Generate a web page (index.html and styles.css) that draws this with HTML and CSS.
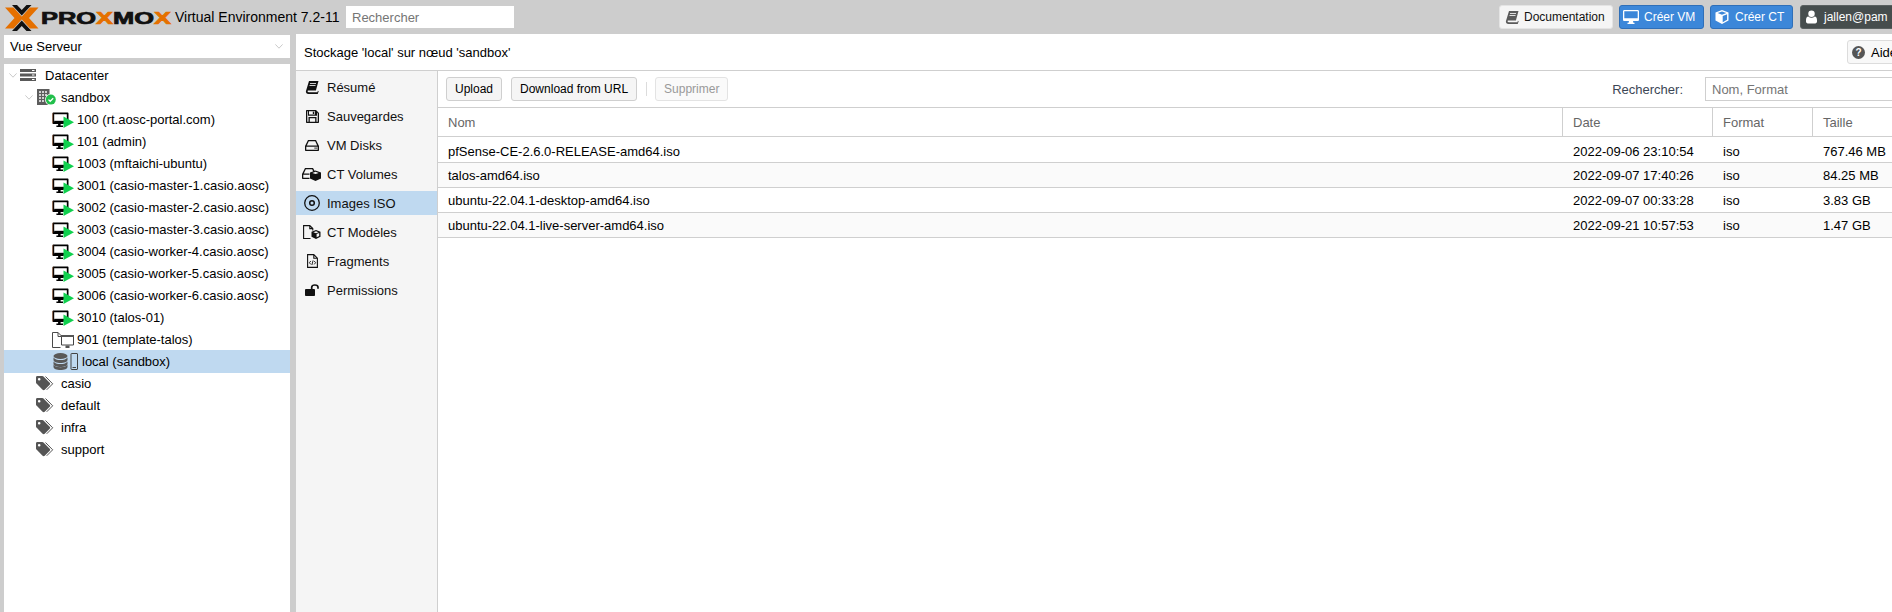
FILE: index.html
```html
<!DOCTYPE html>
<html lang="fr">
<head>
    <meta charset="UTF-8">
    <title>sandbox - Proxmox Virtual Environment</title>
    <link rel="stylesheet" href="styles.css">
</head>
<body>
    <!-- Icon sprites -->
    <svg class="sprites" xmlns="http://www.w3.org/2000/svg">
        <symbol id="i-book" viewBox="0 0 14 14">
            <path d="M4 1h9.500l-2.600 9.600H3.600c-.9 0-1.200.5-1 1 .2.5.6.7 1.200.7h8.600l.5-1.500.8.4-1 2.800H3.400C1.800 14 .7 12.900 .9 11.300z"/>
            <path d="M5 3.500h6M4.500 5.500h6" stroke="#fff" stroke-width=".8"/>
        </symbol>
        <symbol id="i-desktop" viewBox="0 0 16 14">
            <path d="M1.300 0h13.400c.7 0 1.300.6 1.300 1.300v8.400c0 .7-.6 1.300-1.300 1.300H10l.4 1.800h1.100V14h-7v-1.200h1.100L6 11H1.300C.6 11 0 10.400 0 9.700V1.300C0 .6.600 0 1.300 0zM1.300 1.300v7h13.400v-7z"/>
        </symbol>
        <symbol id="i-cube" viewBox="0 0 14 14">
            <path d="M7 0l6.500 2.400v8.200L7 14 .5 10.600V2.400zM7 1.400L2.600 3 7 4.700 11.400 3zM7.700 6v6.200l4.400-2.400V4.300z"/>
        </symbol>
        <symbol id="i-user" viewBox="0 0 12 14">
            <circle cx="6" cy="3.500" r="3.500"/>
            <path d="M2.500 6.500c1 .9 2.200 1.300 3.500 1.300s2.500-.4 3.500-1.300c1.600 0 2.500 1.500 2.500 4V12c0 1.200-.8 2-2 2H2c-1.200 0-2-.8-2-2v-1.500c0-2.500.9-4 2.500-4z"/>
        </symbol>
        <symbol id="i-floppy" viewBox="0 0 13 13">
            <path fill-rule="evenodd" d="M1 0h9l3 3v9c0 .6-.4 1-1 1H1c-.6 0-1-.4-1-1V1c0-.6.4-1 1-1zM3 1.300v3.200h6V1.300zM6.800 1.800h1.500v2.200H6.800zM1.300 1.300v10.400h1.200V7h8v4.700h1.200V3.500L11 2.500v3.300H2V1.300zM3.800 8.200v3.500h5.400V8.200z"/>
        </symbol>
        <symbol id="i-hdd" viewBox="0 0 14 11">
            <path fill-rule="evenodd" d="M3 0h8l3 6v4c0 .6-.4 1-1 1H1c-.6 0-1-.4-1-1V6zM3.800 1.300L1.800 5.500h10.400l-2-4.200zM1.300 6.800v2.900h11.400V6.800zM9.500 7.600h1.200v1.200H9.500zM11.300 7.600h.9v1.200h-.9z"/>
        </symbol>
        <symbol id="i-ctvol" viewBox="0 0 20 14">
            <path fill-rule="evenodd" d="M3 1h8l2.200 4H11.400l-1.200-2.700H3.800L1.800 6.500h5.700v1.300H1.300v2.900h6.200V12H1c-.6 0-1-.4-1-1V7z"/>
            <path d="M13.500 3.500l5.500 2v6L13.500 14 8 11.500v-6z"/>
            <path d="M13.500 4.800l-3.200 1.100 3.200 1.200 3.200-1.200z" fill="#f5f5f5"/>
        </symbol>
        <symbol id="i-iso" viewBox="0 0 16 16">
            <path fill="none" stroke="currentColor" stroke-width="1.300" d="M8 .7a7.300 7.300 0 1 0 0 14.600A7.300 7.300 0 0 0 8 .7z"/>
            <circle cx="8" cy="8" r="2.300" fill="none" stroke="currentColor" stroke-width="1.500"/>
        </symbol>
        <symbol id="i-ctpl" viewBox="0 0 18 14">
            <path fill="none" stroke="currentColor" stroke-width="1.100" d="M7.500 13.500H.6V.6h6.200l3 3v2M6.800.6v3h3"/>
            <path d="M13 5l4.500 1.800v5L13 14l-4.500-2.200v-5z"/>
            <path d="M13 6.200l-2.600 1 2.600 1 2.600-1z" fill="#f5f5f5"/>
            <path d="M13.600 9v3.300l2.600-1.300V8z" fill="#f5f5f5"/>
        </symbol>
        <symbol id="i-code" viewBox="0 0 11 14">
            <path fill="none" stroke="currentColor" stroke-width="1.100" d="M.6.600h6.200l3.600 3.600v9.200H.6zM6.800.6v3.600h3.600"/>
            <path fill="none" stroke="currentColor" stroke-width=".9" d="M3.800 7L2.400 8.700l1.400 1.700M7.200 7l1.400 1.700-1.400 1.700M6.100 6.400L4.900 11"/>
        </symbol>
        <symbol id="i-unlock" viewBox="0 0 14 12">
            <path d="M.8 5h8.400c.4 0 .8.400.8.800v5.400c0 .4-.4.800-.8.800H.8c-.4 0-.8-.4-.8-.8V5.800C0 5.400.4 5 .8 5z"/>
            <path d="M6.700 5V3.300C6.700 1.900 7.900 1 9.800 1s3.200.9 3.200 2.300v1.500" fill="none" stroke="currentColor" stroke-width="1.700"/>
        </symbol>
        <symbol id="i-chevron" viewBox="0 0 8 5">
            <path d="M.4.400L4 4.200 7.600.4" fill="none" stroke="currentColor" stroke-width=".9"/>
        </symbol>
        <symbol id="i-qemu" viewBox="0 0 22 16">
            <path d="M1.500 .6h14c.6 0 1 .4 1 1V9h-1.700V2.300H2.200v7.500H11V12H8.600v1.400H11V15H4.400v-1.600h1.700V12H1.500c-.6 0-1-.4-1-1V1.600c0-.6.4-1 1-1z"/>
            <path d="M2.200 8.800h10v3H2.200z"/>
            <path d="M1.500.8L.7 1.800v9.500" fill="none" stroke="#a8521e" stroke-width=".5"/>
            <path d="M11.500 4.500L22 10.200 11.500 16z" fill="#10d04e"/>
        </symbol>
        <symbol id="i-template" viewBox="0 0 22 16">
            <path fill="none" stroke="#4a4a4a" stroke-width="1" d="M8.500 15.500H.5V.5h5.500l4 4v-.5M6 .5v4h4"/>
            <path fill="#fff" stroke="#444" stroke-width="1" d="M9.500 3.500h12v9.500h-12z"/>
            <path fill="#555" d="M9 3h13v2H9zM13.500 13.500h4V16h-4z"/>
        </symbol>
        <symbol id="i-storage" viewBox="0 0 25 17">
            <ellipse cx="7.500" cy="3" rx="7" ry="3" fill="#595959"/>
            <path fill="#595959" d="M.5 4.500c1 1.700 3.700 2.600 7 2.600s6-.9 7-2.600V7c0 1.700-3.100 3-7 3s-7-1.300-7-3z"/>
            <path fill="#595959" d="M.5 8.500c1 1.700 3.700 2.600 7 2.600s6-.9 7-2.600V11c0 1.700-3.100 3-7 3s-7-1.300-7-3z"/>
            <path fill="#595959" d="M.5 11.800c1 1.700 3.700 2.500 7 2.500s6-.8 7-2.500V14c0 1.700-3.100 3-7 3s-7-1.300-7-3z"/>
            <path fill="none" stroke="#444" stroke-width="1" d="M18.500.5h5.500c.3 0 .5.200.5.500v15c0 .3-.2.500-.5.500h-5.500c-.3 0-.5-.2-.5-.5V1c0-.3.200-.5.500-.5z"/>
            <path stroke="#444" d="M19.500 14.500h3.500"/>
        </symbol>
        <symbol id="i-tag" viewBox="0 0 18 15">
            <path fill="#555" d="M0 1.300C0 .6.600 0 1.300 0h5c.5 0 .9.200 1.200.5l6.200 6.200c.6.600.6 1.500 0 2.100l-5 5c-.6.600-1.500.6-2.100 0L.5 7.600C.2 7.300 0 6.900 0 6.400zM3.200 2a1.300 1.300 0 1 0 0 2.600 1.300 1.300 0 0 0 0-2.600z" fill-rule="evenodd"/>
            <path fill="none" stroke="#555" stroke-width="1" d="M9.500.5l7.200 7.300-6 6"/>
        </symbol>
    </svg>

    <header class="topbar">
        <svg class="logo" viewBox="0 0 168 26" width="168" height="26">
            <path class="logo-orange" d="M0 2.500h8.500L18 13l-9.500 10.500H0L9.500 13z"/>
            <path class="logo-orange" d="M33.500 2.500H25L15.500 13 25 23.500h8.500L24 13z"/>
            <path class="logo-black" d="M7 0h5l4.750 5L21.500 0h5L16.750 10.500z"/>
            <path class="logo-black" d="M7 26h5l4.750-5 4.750 5h5L16.750 15.500z"/>
            <text class="logo-text" x="36" y="19" textLength="130" lengthAdjust="spacingAndGlyphs">PRO<tspan class="logo-orange">X</tspan>MO<tspan class="logo-orange">X</tspan></text>
        </svg>
        <span class="version">Virtual Environment 7.2-11</span>
        <input class="global-search" type="text" placeholder="Rechercher">
        <div class="top-actions">
            <button class="btn btn-light"><svg class="ico"><use href="#i-book"/></svg>Documentation</button>
            <button class="btn btn-blue"><svg class="ico ico-desktop"><use href="#i-desktop"/></svg>Créer VM</button>
            <button class="btn btn-blue btn-ct"><svg class="ico"><use href="#i-cube"/></svg>Créer CT</button>
            <button class="btn btn-user"><svg class="ico ico-user"><use href="#i-user"/></svg>jallen@pam</button>
        </div>
    </header>

    <div class="main">
        <aside class="side">
            <div class="view-select">
                <span>Vue Serveur</span>
                <svg class="chevron"><use href="#i-chevron"/></svg>
            </div>
            <ul class="tree">
                <li class="node lvl-root">
                    <svg class="chevron"><use href="#i-chevron"/></svg>
                    <svg class="t-dc" viewBox="0 0 16 12" width="16" height="12">
                        <path fill="#595959" d="M0 0h16v3H0zM0 4.500h16v3H0zM0 9h16v3H0z"/>
                        <path fill="#fff" d="M12 1h2.500v1H12zM12 5.500h2.500v1H12zM12 10h2.500v1H12z"/>
                    </svg>
                    <span>Datacenter</span>
                </li>
                <li class="node lvl-node">
                    <svg class="chevron"><use href="#i-chevron"/></svg>
                    <svg class="t-host" viewBox="0 0 20 16" width="20" height="16">
                        <path fill="#5d5d5d" d="M0 0h12.500v16H0z"/>
                        <path fill="#cfcfcf" d="M2 2h2v2H2zM5 2h2v2H5zM8 2h2v2H8zM2 5h2v2H2zM5 5h2v2H5zM8 5h2v2H8zM2 8h2v2H2zM5 8h2v2H5zM2 11h2v2H2zM5 11h2v2H5z"/>
                        <circle cx="13.800" cy="10.600" r="5.800" fill="#fff"/>
                        <circle cx="13.800" cy="10.600" r="5" fill="#21bf4b"/>
                        <path d="M11.500 10.600l1.700 1.700 3-3" fill="none" stroke="#fff" stroke-width="1.300"/>
                    </svg>
                    <span>sandbox</span>
                </li>
                <li class="node lvl-vm"><svg class="t-vm"><use href="#i-qemu"/></svg><span>100 (rt.aosc-portal.com)</span></li>
                <li class="node lvl-vm"><svg class="t-vm"><use href="#i-qemu"/></svg><span>101 (admin)</span></li>
                <li class="node lvl-vm"><svg class="t-vm"><use href="#i-qemu"/></svg><span>1003 (mftaichi-ubuntu)</span></li>
                <li class="node lvl-vm"><svg class="t-vm"><use href="#i-qemu"/></svg><span>3001 (casio-master-1.casio.aosc)</span></li>
                <li class="node lvl-vm"><svg class="t-vm"><use href="#i-qemu"/></svg><span>3002 (casio-master-2.casio.aosc)</span></li>
                <li class="node lvl-vm"><svg class="t-vm"><use href="#i-qemu"/></svg><span>3003 (casio-master-3.casio.aosc)</span></li>
                <li class="node lvl-vm"><svg class="t-vm"><use href="#i-qemu"/></svg><span>3004 (casio-worker-4.casio.aosc)</span></li>
                <li class="node lvl-vm"><svg class="t-vm"><use href="#i-qemu"/></svg><span>3005 (casio-worker-5.casio.aosc)</span></li>
                <li class="node lvl-vm"><svg class="t-vm"><use href="#i-qemu"/></svg><span>3006 (casio-worker-6.casio.aosc)</span></li>
                <li class="node lvl-vm"><svg class="t-vm"><use href="#i-qemu"/></svg><span>3010 (talos-01)</span></li>
                <li class="node lvl-vm"><svg class="t-vm"><use href="#i-template"/></svg><span>901 (template-talos)</span></li>
                <li class="node lvl-store selected"><svg class="t-store"><use href="#i-storage"/></svg><span>local (sandbox)</span></li>
                <li class="node lvl-tag"><svg class="t-tag"><use href="#i-tag"/></svg><span>casio</span></li>
                <li class="node lvl-tag"><svg class="t-tag"><use href="#i-tag"/></svg><span>default</span></li>
                <li class="node lvl-tag"><svg class="t-tag"><use href="#i-tag"/></svg><span>infra</span></li>
                <li class="node lvl-tag"><svg class="t-tag"><use href="#i-tag"/></svg><span>support</span></li>
            </ul>
        </aside>

        <section class="content">
            <div class="content-head">
                <span>Stockage 'local' sur nœud 'sandbox'</span>
                <button class="btn btn-help"><span class="help-dot">?</span>Aide</button>
            </div>
            <div class="content-body">
                <nav class="tabs">
                    <a class="tab"><span class="tab-ico"><svg class="ti-book"><use href="#i-book"/></svg></span>Résumé</a>
                    <a class="tab"><span class="tab-ico"><svg class="ti-floppy"><use href="#i-floppy"/></svg></span>Sauvegardes</a>
                    <a class="tab"><span class="tab-ico"><svg class="ti-hdd"><use href="#i-hdd"/></svg></span>VM Disks</a>
                    <a class="tab"><span class="tab-ico"><svg class="ti-ctvol"><use href="#i-ctvol"/></svg></span>CT Volumes</a>
                    <a class="tab active"><span class="tab-ico"><svg class="ti-iso"><use href="#i-iso"/></svg></span>Images ISO</a>
                    <a class="tab"><span class="tab-ico"><svg class="ti-ctpl"><use href="#i-ctpl"/></svg></span>CT Modèles</a>
                    <a class="tab"><span class="tab-ico"><svg class="ti-code"><use href="#i-code"/></svg></span>Fragments</a>
                    <a class="tab"><span class="tab-ico"><svg class="ti-unlock"><use href="#i-unlock"/></svg></span>Permissions</a>
                </nav>
                <div class="panel">
                    <div class="toolbar">
                        <button class="btn btn-tool">Upload</button>
                        <button class="btn btn-tool">Download from URL</button>
                        <span class="tb-sep"></span>
                        <button class="btn btn-tool disabled">Supprimer</button>
                        <label class="tb-label" for="filter">Rechercher:</label>
                        <input class="tb-filter" id="filter" type="text" placeholder="Nom, Format">
                    </div>
                    <table class="grid">
                        <colgroup>
                            <col class="c-name"><col class="c-date"><col class="c-format"><col class="c-size">
                        </colgroup>
                        <thead>
                            <tr><th>Nom</th><th>Date</th><th>Format</th><th>Taille</th></tr>
                        </thead>
                        <tbody>
                            <tr><td>pfSense-CE-2.6.0-RELEASE-amd64.iso</td><td>2022-09-06 23:10:54</td><td>iso</td><td>767.46 MB</td></tr>
                            <tr><td>talos-amd64.iso</td><td>2022-09-07 17:40:26</td><td>iso</td><td>84.25 MB</td></tr>
                            <tr><td>ubuntu-22.04.1-desktop-amd64.iso</td><td>2022-09-07 00:33:28</td><td>iso</td><td>3.83 GB</td></tr>
                            <tr><td>ubuntu-22.04.1-live-server-amd64.iso</td><td>2022-09-21 10:57:53</td><td>iso</td><td>1.47 GB</td></tr>
                        </tbody>
                    </table>
                </div>
            </div>
        </section>
    </div>
</body>
</html>
```

FILE: styles.css
```css
/* General Styles */
* {
    box-sizing: border-box;
}

html, body {
    height: 100%;
    overflow: hidden;
}

body {
    margin: 0;
    width: 1892px;
    height: 612px;
    display: flex;
    flex-direction: column;
    background: #cdcdcd;
    font-family: "Liberation Sans", Arial, sans-serif;
    font-size: 13px;
    color: #000;
}

.sprites {
    display: none;
}

/* Top bar */
.topbar {
    display: flex;
    align-items: center;
    height: 34px;
    flex: none;
    width: 1900px;
    padding-left: 5px;
}

.logo {
    flex: none;
    margin-top: 1px;
}

.logo-orange {
    fill: #e57000;
}

.logo-black {
    fill: #111;
}

.logo-text {
    font-family: "Liberation Sans", sans-serif;
    font-weight: 700;
    font-size: 16px;
    stroke: #111;
    stroke-width: 0.7;
    fill: #111;
}

.logo-text tspan {
    stroke: #e57000;
    fill: #e57000;
}

.version {
    margin-left: 2px;
    font-size: 14px;
    width: 171px;
    white-space: nowrap;
}

.global-search {
    width: 168px;
    height: 22px;
    border: none;
    background: #fff;
    padding: 0 6px;
    font: inherit;
}

.global-search::placeholder,
.tb-filter::placeholder {
    color: #757575;
    opacity: 1;
}

.top-actions {
    margin-left: auto;
    display: flex;
    gap: 6px;
}

.btn {
    display: inline-flex;
    align-items: center;
    height: 24px;
    padding: 0;
    border: 1px solid #cfcfcf;
    border-radius: 3px;
    background: #f5f5f5;
    font: inherit;
    font-size: 12px;
    color: #000;
}

.ico {
    width: 14px;
    height: 14px;
    fill: currentColor;
    margin-right: 6px;
    flex: none;
}

.btn-light {
    width: 114px;
    padding-left: 5px;
    border-color: #e4e4e4;
    color: #111;
}

.btn-light .ico {
    fill: #5a5a5a;
    margin-right: 5px;
}

.btn-blue {
    width: 85px;
    padding-left: 3px;
    background: #3c87d9;
    border-color: #2f6fb8;
    color: #fff;
}

.btn-ct {
    width: 83px;
    padding-left: 4px;
}

.ico-desktop {
    width: 16px;
    margin-right: 5px;
}

.btn-user {
    width: 100px;
    margin-left: 1px;
    padding-left: 5px;
    background: #464d4d;
    border-color: #5a6060;
    color: #fff;
}

.ico-user {
    width: 11px;
    margin-right: 7px;
}

/* Main layout */
.main {
    flex: 1;
    display: flex;
    min-height: 0;
}

.side {
    width: 286px;
    margin-left: 4px;
    display: flex;
    flex-direction: column;
    flex: none;
}

.view-select {
    display: flex;
    align-items: center;
    justify-content: space-between;
    height: 23px;
    margin-top: 1px;
    padding: 0 7px 0 6px;
    background: #fff;
}

.chevron {
    width: 8px;
    height: 5px;
    color: #c4c4c4;
    flex: none;
}

.tree {
    flex: 1;
    margin: 6px 0 0;
    padding: 0;
    list-style: none;
    background: #fff;
}

.node {
    display: flex;
    align-items: center;
    height: 22px;
    white-space: nowrap;
}

.node.selected {
    background: #bfd9f0;
    height: 23px;
    margin-bottom: -1px;
}

.lvl-root {
    padding-left: 5px;
}

.lvl-root .t-dc {
    margin: 0 9px 0 3px;
}

.lvl-node {
    padding-left: 21px;
}

.lvl-node .t-host {
    margin: 0 4px 0 4px;
}

.lvl-vm {
    padding-left: 48px;
}

.t-vm {
    width: 22px;
    height: 16px;
    margin: 1px 3px 0 0;
    flex: none;
}

.lvl-store {
    padding-left: 49px;
}

.t-store {
    width: 25px;
    height: 17px;
    margin-right: 4px;
    flex: none;
}

.lvl-tag {
    padding-left: 32px;
}

.t-tag {
    width: 18px;
    height: 15px;
    margin-right: 7px;
    flex: none;
}

/* Content panel */
.content {
    width: 1616px;
    margin-left: 6px;
    flex: none;
    display: flex;
    flex-direction: column;
    background: #fff;
}

.content-head {
    display: flex;
    align-items: center;
    justify-content: space-between;
    height: 37px;
    flex: none;
    padding: 0 8px;
    border-bottom: 1px solid #cfcfcf;
}

.btn-help {
    width: 57px;
    padding-left: 4px;
    font-size: 13px;
    background: #f8f8f8;
    border-color: #dcdcdc;
}

.help-dot {
    width: 13px;
    height: 13px;
    margin-right: 6px;
    border-radius: 50%;
    background: #555;
    color: #fff;
    font-weight: 700;
    font-size: 10px;
    line-height: 13px;
    text-align: center;
}

.content-body {
    flex: 1;
    display: flex;
    min-height: 0;
}

.tabs {
    width: 142px;
    flex: none;
    display: flex;
    flex-direction: column;
    gap: 5px;
    padding-top: 4px;
    background: #f5f5f5;
    border-right: 1px solid #cfcfcf;
    color: #111;
}

.tab {
    display: flex;
    align-items: center;
    height: 24px;
}

.tab.active {
    background: #bfd9f0;
}

.tab-ico {
    width: 31px;
    flex: none;
    display: flex;
    justify-content: center;
    padding-left: 1px;
    color: #111;
    fill: currentColor;
}

.ti-book { width: 14px; height: 14px; }
.ti-floppy { width: 13px; height: 13px; }
.ti-hdd { width: 14px; height: 11px; }
.ti-ctvol { width: 20px; height: 14px; }
.ti-iso { width: 16px; height: 16px; }
.ti-ctpl { width: 18px; height: 14px; }
.ti-code { width: 11px; height: 14px; }
.ti-unlock { width: 14px; height: 12px; }

.panel {
    flex: 1;
    min-width: 0;
}

.toolbar {
    display: flex;
    align-items: center;
    height: 37px;
    padding: 0 8px;
    border-bottom: 1px solid #cfcfcf;
}

.btn-tool {
    height: 24px;
    padding: 0 8px;
    margin-right: 9px;
}

.disabled {
    color: #999;
    background: #fafafa;
    border-color: #e3e3e3;
}

.tb-sep {
    width: 1px;
    height: 14px;
    margin-right: 8px;
    background: #dcdcdc;
}

.tb-label {
    margin-left: auto;
    margin-right: 22px;
    color: #3c4655;
}

.tb-filter {
    width: 199px;
    height: 24px;
    border: 1px solid #cfcfcf;
    padding: 0 6px;
    font: inherit;
}

/* Grid */
.grid {
    width: 100%;
    table-layout: fixed;
    border-collapse: separate;
    border-spacing: 0;
}

.c-name { width: 1125px; }
.c-date { width: 150px; }
.c-format { width: 100px; }
.c-size { width: 111px; }

.grid th {
    height: 29px;
    padding: 0 10px;
    text-align: left;
    font-weight: 400;
    color: #666;
    border-right: 1px solid #cfcfcf;
    border-bottom: 1px solid #cfcfcf;
}

.grid th:last-child {
    border-right: none;
}

.grid td {
    height: 25px;
    padding: 1px 10px 0;
    border-bottom: 1px solid #cfcfcf;
    white-space: nowrap;
}

.grid tbody tr:first-child td {
    height: 26px;
    padding-top: 3px;
}

.grid tbody tr:nth-child(even) {
    background: #fafafa;
}
```
